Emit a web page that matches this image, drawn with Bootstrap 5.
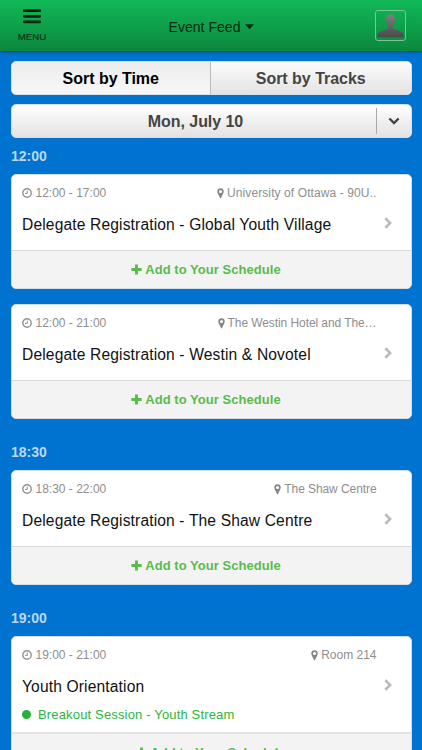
<!DOCTYPE html>
<html lang="en">
<head>
<meta charset="utf-8">
<meta name="viewport" content="width=device-width, initial-scale=1">
<title>Event Feed</title>
<link href="https://cdn.jsdelivr.net/npm/bootstrap@5.3.0/dist/css/bootstrap.min.css" rel="stylesheet">
<style>
html, body { height: 100%; }
body { background: #0073d1; font-family: "Liberation Sans", Arial, sans-serif; line-height: 1; overflow: hidden; color: #111; }
svg { display: block; flex: none; }
.topbar { height: 51px; flex: none; background: linear-gradient(#10b958, #0d873e); box-shadow: 0 1px 3px rgba(0,30,60,.55); color: #042c12; }
.menu-btn { width: 64px; padding-top: 9px; font-size: 9.7px; gap: 8px; color: #03230f; }
.feed-title { font-size: 14px; letter-spacing: .04px; gap: 4px; padding-top: 3px; color: #04280f; }
.avatar-box { width: 31px; height: 31px; margin: 10px 16px 0 17px; border: 1px solid #79c796; border-radius: 3px; }
.feed { padding: 10px 10.5px 0; }
.sort-tabs { height: 33.5px; border-radius: 5px; background: #fff; overflow: hidden; border: 1px solid #d5e0ea; font-size: 16px; font-weight: 700; }
.sort-tabs > div { color: #444; background: linear-gradient(#fcfcfc, #e3e3e3); letter-spacing: -.02px; padding-top: 2px; }
.sort-tabs > .current { color: #000; background: linear-gradient(#ececec, #f7f7f7); border-right: 1px solid #bbb; }
.day-select { height: 34px; margin-top: 9.5px; border-radius: 5px; border: 1px solid #d5e0ea; background: linear-gradient(#fff, #e2e2e2); font-size: 16px; font-weight: 700; color: #444; }
.day-name { padding-left: 4px; padding-top: 1px; letter-spacing: -.06px; }
.day-arrow { width: 35px; height: 26px; border-left: 1px solid #aaa; }
.slot-time { font-size: 14px; font-weight: 700; color: #bcd7ef; height: 14px; margin: 11px 0 11px .5px; }
.session { border: 1px solid #d2dfeb; border-radius: 5px; background: #fff; height: 115px; overflow: hidden; margin-bottom: 15px; }
.session-top { height: 75px; padding: 0 0 0 10.5px; }
.session-info { padding: 12px 0 0; width: 354.5px; }
.meta { font-size: 12px; color: #8e8e8e; height: 12px; }
.meta .clock { margin-right: 3.5px; }
.meta .pin { margin-right: 3px; }
.place-wide { letter-spacing: .1px; }
.place-tight { letter-spacing: -.08px; }
.session-name { font-size: 15.6px; letter-spacing: .14px; line-height: 20px; margin-top: 16px; color: #111; white-space: nowrap; }
.session-go { padding: 42px 0 0 7px; }
.session-add { height: 39px; background: #f3f3f3; border-top: 1px solid #d8d8d8; color: #5abb4c; font-size: 13px; font-weight: 700; gap: 3px; padding: 0 10px 1px 0; letter-spacing: .04px; }
.slot-gap { margin-top: 26px; }
.session.tall { height: 143px; margin-bottom: 0; }
.tall .session-top { height: 95px; }
.tall .session-add { padding: 0; border-top: 2px solid #e2e2e2; height: 38px; }
.stream { color: #2cb53c; font-size: 13px; letter-spacing: .16px; margin-top: 11px; gap: 7px; white-space: nowrap; }
.stream-dot { width: 9px; height: 9px; border-radius: 50%; background: #25b13a; }
</style>
</head>
<body class="d-flex flex-column">
<svg width="0" height="0" class="d-none" aria-hidden="true">
  <symbol id="clock" viewBox="0 0 10 10"><circle cx="5" cy="5" r="4.2" fill="none" stroke="#929292" stroke-width="1.4"/><path d="M5.3 2.6V5.4H3" fill="none" stroke="#929292" stroke-width="1"/></symbol>
  <symbol id="pin" viewBox="0 0 7 11"><path fill-rule="evenodd" fill="#858585" d="M3.5 .3A3.2 3.2 0 0 0 .3 3.5c0 .7.2 1.2.4 1.7L3 10.1c.2.5.8.5 1 0l2.3-4.9c.2-.5.4-1 .4-1.7A3.2 3.2 0 0 0 3.5 .3zM3.5 1.9a1.6 1.6 0 1 1 0 3.2 1.6 1.6 0 0 1 0-3.2z"/></symbol>
  <symbol id="plus" viewBox="0 0 11 11"><path d="M5.5 .4V10.6M.4 5.5H10.6" stroke="#5abb4c" stroke-width="2.9"/></symbol>
  <symbol id="next" viewBox="0 0 8 12"><path d="M1.3 1.2L6.2 6L1.3 10.8" fill="none" stroke="#bababa" stroke-width="2.6"/></symbol>
</svg>

<header class="topbar d-flex">
  <div class="menu-btn d-flex flex-column align-items-center">
    <svg width="18" height="15" viewBox="0 0 18 15"><path d="M1.3 1.7H16.7M1.3 7.3H16.7M1.3 12.9H16.7" stroke="#03230f" stroke-width="2.7" stroke-linecap="round"/></svg>
    <span class="menu-word">MENU</span>
  </div>
  <div class="feed-title flex-grow-1 d-flex align-items-center justify-content-center">Event Feed
    <svg width="9" height="6" viewBox="0 0 9 6"><path d="M0 .3H9L4.5 5.3z" fill="#04280f"/></svg>
  </div>
  <div class="avatar-box d-flex align-items-center justify-content-center">
    <svg width="27" height="25" viewBox="0 0 27 25"><defs><linearGradient id="shade" x1="0" y1="0" x2="0" y2="1"><stop offset="0" stop-color="#808080"/><stop offset="1" stop-color="#4a4a4a"/></linearGradient></defs><path fill="url(#shade)" d="M13.5 1.3c-2.8 0-4.4 2-4.4 4.8 0 2 .4 3.5 1.2 5 .6 1 .8 2 .6 3.4-.2 1-1 1.7-2.4 2.2C5 17.8 1 18.4.5 21.5L.3 24.2H26.7L26.5 21.5c-.5-3.1-4.5-3.7-8-4.8-1.4-.5-2.2-1.2-2.4-2.2-.2-1.4 0-2.4.6-3.4.8-1.5 1.2-3 1.2-5 0-2.8-1.6-4.8-4.4-4.8z"/></svg>
  </div>
</header>

<main class="feed">
  <div class="sort-tabs d-flex">
    <div class="current w-50 d-flex align-items-center justify-content-center">Sort by Time</div>
    <div class="w-50 d-flex align-items-center justify-content-center">Sort by Tracks</div>
  </div>
  <div class="day-select d-flex align-items-center">
    <div class="day-name flex-grow-1 text-center">Mon, July 10</div>
    <div class="day-arrow d-flex align-items-center justify-content-center"><svg width="12" height="8" viewBox="0 0 12 8"><path d="M1.4 1.5L6 6L10.6 1.5" fill="none" stroke="#444" stroke-width="2.4"/></svg></div>
  </div>

  <div class="slot-time">12:00</div>
  <article class="session">
    <div class="session-top d-flex">
      <div class="session-info">
        <div class="meta d-flex align-items-center"><svg class="clock" width="10" height="10"><use href="#clock"/></svg>12:00 - 17:00<svg class="pin ms-auto" width="7" height="11"><use href="#pin"/></svg><span class="place-wide">University of Ottawa - 90U..</span></div>
        <div class="session-name">Delegate Registration - Global Youth Village</div>
      </div>
      <div class="session-go"><svg width="8" height="12"><use href="#next"/></svg></div>
    </div>
    <div class="session-add d-flex align-items-center justify-content-center"><svg width="11" height="11"><use href="#plus"/></svg>Add to Your Schedule</div>
  </article>
  <article class="session">
    <div class="session-top d-flex">
      <div class="session-info">
        <div class="meta d-flex align-items-center"><svg class="clock" width="10" height="10"><use href="#clock"/></svg>12:00 - 21:00<svg class="pin ms-auto" width="7" height="11"><use href="#pin"/></svg><span class="place-tight">The Westin Hotel and The…</span></div>
        <div class="session-name">Delegate Registration - Westin &amp; Novotel</div>
      </div>
      <div class="session-go"><svg width="8" height="12"><use href="#next"/></svg></div>
    </div>
    <div class="session-add d-flex align-items-center justify-content-center"><svg width="11" height="11"><use href="#plus"/></svg>Add to Your Schedule</div>
  </article>

  <div class="slot-time slot-gap">18:30</div>
  <article class="session">
    <div class="session-top d-flex">
      <div class="session-info">
        <div class="meta d-flex align-items-center"><svg class="clock" width="10" height="10"><use href="#clock"/></svg>18:30 - 22:00<svg class="pin ms-auto" width="7" height="11"><use href="#pin"/></svg><span class="place-tight">The Shaw Centre</span></div>
        <div class="session-name">Delegate Registration - The Shaw Centre</div>
      </div>
      <div class="session-go"><svg width="8" height="12"><use href="#next"/></svg></div>
    </div>
    <div class="session-add d-flex align-items-center justify-content-center"><svg width="11" height="11"><use href="#plus"/></svg>Add to Your Schedule</div>
  </article>

  <div class="slot-time slot-gap">19:00</div>
  <article class="session tall">
    <div class="session-top d-flex">
      <div class="session-info">
        <div class="meta d-flex align-items-center"><svg class="clock" width="10" height="10"><use href="#clock"/></svg>19:00 - 21:00<svg class="pin ms-auto" width="7" height="11"><use href="#pin"/></svg><span>Room 214</span></div>
        <div class="session-name">Youth Orientation</div>
        <div class="stream d-flex align-items-center"><span class="stream-dot"></span>Breakout Session - Youth Stream</div>
      </div>
      <div class="session-go"><svg width="8" height="12"><use href="#next"/></svg></div>
    </div>
    <div class="session-add d-flex align-items-center justify-content-center"><svg width="11" height="11"><use href="#plus"/></svg>Add to Your Schedule</div>
  </article>
</main>
<script src="https://cdn.jsdelivr.net/npm/bootstrap@5.3.0/dist/js/bootstrap.bundle.min.js"></script>
</body>
</html>
